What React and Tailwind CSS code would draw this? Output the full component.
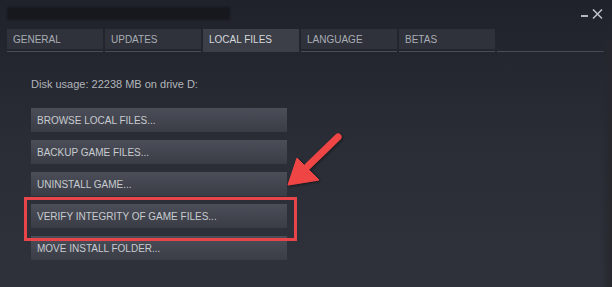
import React from "react"

const tabs = ["GENERAL", "UPDATES", "LOCAL FILES", "LANGUAGE", "BETAS"]
const actions = [
  "BROWSE LOCAL FILES...",
  "BACKUP GAME FILES...",
  "UNINSTALL GAME...",
  "VERIFY INTEGRITY OF GAME FILES...",
  "MOVE INSTALL FOLDER...",
]

export default function App() {
  return (
    <div
      className="relative w-[612px] h-[287px] overflow-hidden bg-gradient-to-b from-[#1f222b] via-[#2a2d35] to-[#2f323b]"
      style={{ fontFamily: '"Liberation Sans", Arial, sans-serif' }}
    >
      {/* title bar */}
      <div className="flex items-start h-[29px] pl-[7px] pt-[7px]">
        <div className="w-[223px] h-[13px] bg-[#17181e] blur-[1px]" />
        <div className="ml-auto mr-[9px] mt-[2px] flex items-end gap-[4px]">
          <div className="w-[7px] h-[2px] bg-[#b4b7bd] mb-[2px]" />
          <svg width="11" height="10" viewBox="0 0 11 10">
            <path d="M1 0.5 L10 9.5 M10 0.5 L1 9.5" stroke="#c0c3c8" strokeWidth="1.5" />
          </svg>
        </div>
      </div>

      {/* tabs */}
      <div className="flex pl-[7px] pr-[8px]">
        {tabs.map((t) => {
          const active = t === "LOCAL FILES"
          return (
            <div
              key={t}
              className={`w-[96px] mr-[2px] flex flex-col ${active ? "bg-[#3c3f48]" : ""}`}
            >
              <div
                className={`h-[20px] flex items-center pl-[6px] text-[10px] ${
                  active ? "text-[#d6d8dc]" : "bg-[#2f323a] text-[#a9adb5]"
                }`}
              >
                {t}
              </div>
              <div className="h-[2px]" />
              <div className={`h-px ${active ? "" : "bg-[#4a4d55]"}`} />
            </div>
          )
        })}
        <div className="flex-1 flex flex-col justify-end">
          <div className="h-px bg-[#4a4d55]" />
        </div>
      </div>

      {/* content */}
      <div className="pl-[31px] pt-[26px]">
        <div className="text-[11px] leading-[13px] text-[#b2b5bb]">
          Disk usage: 22238 MB on drive D:
        </div>
        <div className="mt-[17px] flex flex-col gap-[8px]">
          {actions.map((a) => (
            <div
              key={a}
              className="w-[256px] h-[24px] flex items-center pl-[6px] text-[10px] text-[#c8cbd0] bg-gradient-to-b from-[#4b4e58] to-[#3a3d46]"
            >
              {a}
            </div>
          ))}
        </div>
      </div>

      {/* right edge */}
      <div className="absolute right-0 top-[40px] w-[12px] h-[247px] bg-gradient-to-r from-transparent to-[#25272d]" />

      {/* highlight box */}
      <div className="absolute left-[24px] top-[197px] w-[273px] h-[44px] border-[3px] border-[#e8444a]" />

      {/* arrow */}
      <svg className="absolute left-[278px] top-[128px]" width="70" height="66" viewBox="0 0 70 66">
        <defs>
          <filter id="sh" x="-20%" y="-20%" width="140%" height="140%">
            <feDropShadow dx="1" dy="1" stdDeviation="1.5" floodColor="#000" floodOpacity="0.5" />
          </filter>
        </defs>
        <g filter="url(#sh)" fill="#f04545" stroke="#f04545">
          <line x1="60" y1="9" x2="30" y2="38" strokeWidth="7" strokeLinecap="round" />
          <path d="M10 57 L19 30 L41 52 Z" strokeWidth="1" strokeLinejoin="round" />
        </g>
      </svg>
    </div>
  )
}
